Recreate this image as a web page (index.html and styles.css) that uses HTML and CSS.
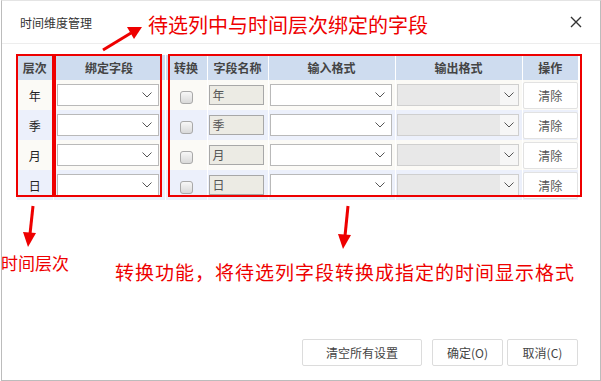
FILE: index.html
```html
<!DOCTYPE html>
<html lang="zh-CN">
<head>
  <meta charset="UTF-8" />
  <title>时间维度管理</title>
  <link rel="stylesheet" href="styles.css">
</head>
<body>

  <div class="dialog">
    <div class="title-bar">
      <span class="title">时间维度管理</span>
      <svg class="close" width="12" height="12" viewBox="0 0 12 12">
        <path d="M1 1 L11 11 M11 1 L1 11" stroke="#333" stroke-width="1.4" fill="none"/>
      </svg>
    </div>

    <div class="content">
      <table class="grid">
        <colgroup>
          <col style="width:36px">
          <col style="width:112px">
          <col style="width:42px">
          <col style="width:61px">
          <col style="width:127px">
          <col style="width:127px">
          <col style="width:56px">
        </colgroup>
        <thead>
          <tr>
            <th>层次</th>
            <th>绑定字段</th>
            <th>转换</th>
            <th>字段名称</th>
            <th>输入格式</th>
            <th>输出格式</th>
            <th>操作</th>
          </tr>
        </thead>
        <tbody id="rows"></tbody>
      </table>
    </div>

    <div class="footer">
      <button class="btn wide">清空所有设置</button>
      <button class="btn ok">确定(O)</button>
      <button class="btn">取消(C)</button>
    </div>

    <!-- annotations drawn over the dialog -->
    <div class="mark mark-level"></div>
    <div class="mark mark-bind"></div>
    <div class="mark mark-format"></div>

    <svg class="arrows" width="601" height="381">
      <g stroke="#e00" stroke-width="3" fill="#e00">
        <line x1="103" y1="50" x2="131" y2="33"/>
        <polygon points="142,27 127,27 134,39" stroke="none"/>
        <line x1="33" y1="206" x2="30" y2="234"/>
        <polygon points="28,247 23,232 36,233" stroke="none"/>
        <line x1="348" y1="206" x2="345" y2="236"/>
        <polygon points="343,249 338,234 351,235" stroke="none"/>
      </g>
    </svg>

    <div class="note note-top">待选列中与时间层次绑定的字段</div>
    <div class="note note-level">时间层次</div>
    <div class="note note-format">转换功能，将待选列字段转换成指定的时间显示格式</div>
  </div>

  <script>
    const levels = ["年", "季", "月", "日"];
    const chevron = '<svg width="10" height="6" viewBox="0 0 10 6"><path d="M0.5 0.5 L5 5 L9.5 0.5" stroke="#555" fill="none"/></svg>';
    const body = document.getElementById("rows");

    levels.forEach(function (name) {
      const tr = document.createElement("tr");
      tr.innerHTML =
        '<td class="level">' + name + '</td>' +
        '<td class="c-bind"><div class="select bind">' + chevron + '</div></td>' +
        '<td class="c-check"><span class="check"></span></td>' +
        '<td class="c-name"><div class="name-box">' + name + '</div></td>' +
        '<td class="c-in"><div class="select fmt">' + chevron + '</div></td>' +
        '<td class="c-out"><div class="select fmt disabled"><span class="arrow-zone">' + chevron + '</span></div></td>' +
        '<td class="c-op"><button class="clear">清除</button></td>';
      body.appendChild(tr);
    });
  </script>

</body>
</html>
```

FILE: styles.css
```css
body {
  margin: 0;
  padding: 0;
  background-color: #fff;
  font-family: "Noto Sans CJK SC", "Microsoft YaHei", sans-serif;
  font-size: 12px;
  color: #333;
}

.dialog {
  position: relative;
  box-sizing: border-box;
  width: 600px;
  height: 381px;
  margin-left: 1px;
  border: 1px solid #bcbcbc;
  border-top-color: #e4e4e4;
  display: flex;
  flex-direction: column;
  overflow: hidden;
}

.title-bar {
  height: 42px;
  border-bottom: 1px solid #ededed;
  display: flex;
  align-items: center;
  justify-content: space-between;
  padding: 0 18px 0 18px;
}

.title {
  font-size: 12px;
  color: #333;
}

.content {
  flex: 1;
  padding: 11px 0 0 15px;
}

/* table */
.grid {
  border-collapse: collapse;
  table-layout: fixed;
  width: 561px;
}

.grid th {
  height: 25px;
  padding: 0;
  background-color: #cedcef;
  border-left: 1px solid #fff;
  font-weight: bold;
  font-size: 12px;
  color: #444;
  text-align: center;
}

.grid th:first-child {
  border-left: none;
}

.grid td {
  height: 30px;
  padding: 0;
  border-left: 1px solid #fff;
  vertical-align: middle;
}

.grid td:first-child {
  border-left: none;
}

.grid tbody tr:nth-child(odd) td {
  background-color: #fbfaf6;
}

.grid tbody tr:nth-child(even) td {
  background-color: #ecf0fb;
}

.level {
  text-align: center;
  font-size: 12px;
  color: #222;
}

.select {
  box-sizing: border-box;
  height: 22px;
  border: 1px solid #b9b9b9;
  background-color: #fff;
  display: flex;
  align-items: center;
  justify-content: flex-end;
  padding-right: 6px;
}

.c-bind {
  padding-left: 3px !important;
}

.select.bind {
  width: 102px;
}

.c-in,
.c-out {
  padding-left: 1px !important;
}

.select.fmt {
  width: 122px;
}

.select.disabled {
  background-color: #e8e8e8;
  border-color: #cfcfcf;
  padding-right: 0;
}

.arrow-zone {
  height: 20px;
  width: 18px;
  background-color: #f6f6f6;
  display: flex;
  align-items: center;
  justify-content: center;
}

.c-check {
  text-align: center;
}

.check {
  display: inline-block;
  box-sizing: border-box;
  width: 13px;
  height: 13px;
  border: 1px solid #a9a9a9;
  border-radius: 3px;
  background: linear-gradient(#f7f7f7, #d9d9d9);
  vertical-align: middle;
}

.c-name {
  padding-left: 1px !important;
}

.name-box {
  box-sizing: border-box;
  width: 55px;
  height: 20px;
  border: 1px solid #a8a8a8;
  background-color: #ecebe4;
  padding-left: 3px;
  line-height: 18px;
  font-size: 12px;
  color: #555;
}

.c-op {
  text-align: center;
}

.clear {
  box-sizing: border-box;
  width: 55px;
  height: 27px;
  border: 1px solid #e2e2e2;
  border-radius: 2px;
  background-color: #fff;
  font-family: inherit;
  font-size: 12px;
  color: #555;
  padding: 0;
}

/* footer buttons */
.footer {
  display: flex;
  justify-content: flex-end;
  padding: 0 22px 14px 0;
}

.btn {
  box-sizing: border-box;
  width: 71px;
  height: 27px;
  margin-left: 4px;
  border: 1px solid #dcdcdc;
  border-radius: 2px;
  background-color: #fff;
  font-family: inherit;
  font-size: 12px;
  color: #444;
  padding: 0;
}

.btn.wide {
  width: 120px;
}

.btn.ok {
  margin-left: 10px;
}

/* annotation overlay */
.mark {
  position: absolute;
  border: 2px solid #e00;
  box-sizing: border-box;
}

.mark-level {
  left: 14px;
  top: 53px;
  width: 38px;
  height: 143px;
}

.mark-bind {
  left: 52px;
  top: 53px;
  width: 108px;
  height: 143px;
}

.mark-format {
  left: 166px;
  top: 53px;
  width: 414px;
  height: 143px;
}

.arrows {
  position: absolute;
  left: -2px;
  top: -1px;
  pointer-events: none;
}

.note {
  position: absolute;
  color: #e00;
  white-space: nowrap;
}

.note-top {
  left: 146px;
  top: 9px;
  font-size: 20px;
}

.note-level {
  left: -1px;
  top: 249px;
  font-size: 17px;
}

.note-format {
  left: 113px;
  top: 257px;
  font-size: 19px;
  letter-spacing: 1px;
}
```
